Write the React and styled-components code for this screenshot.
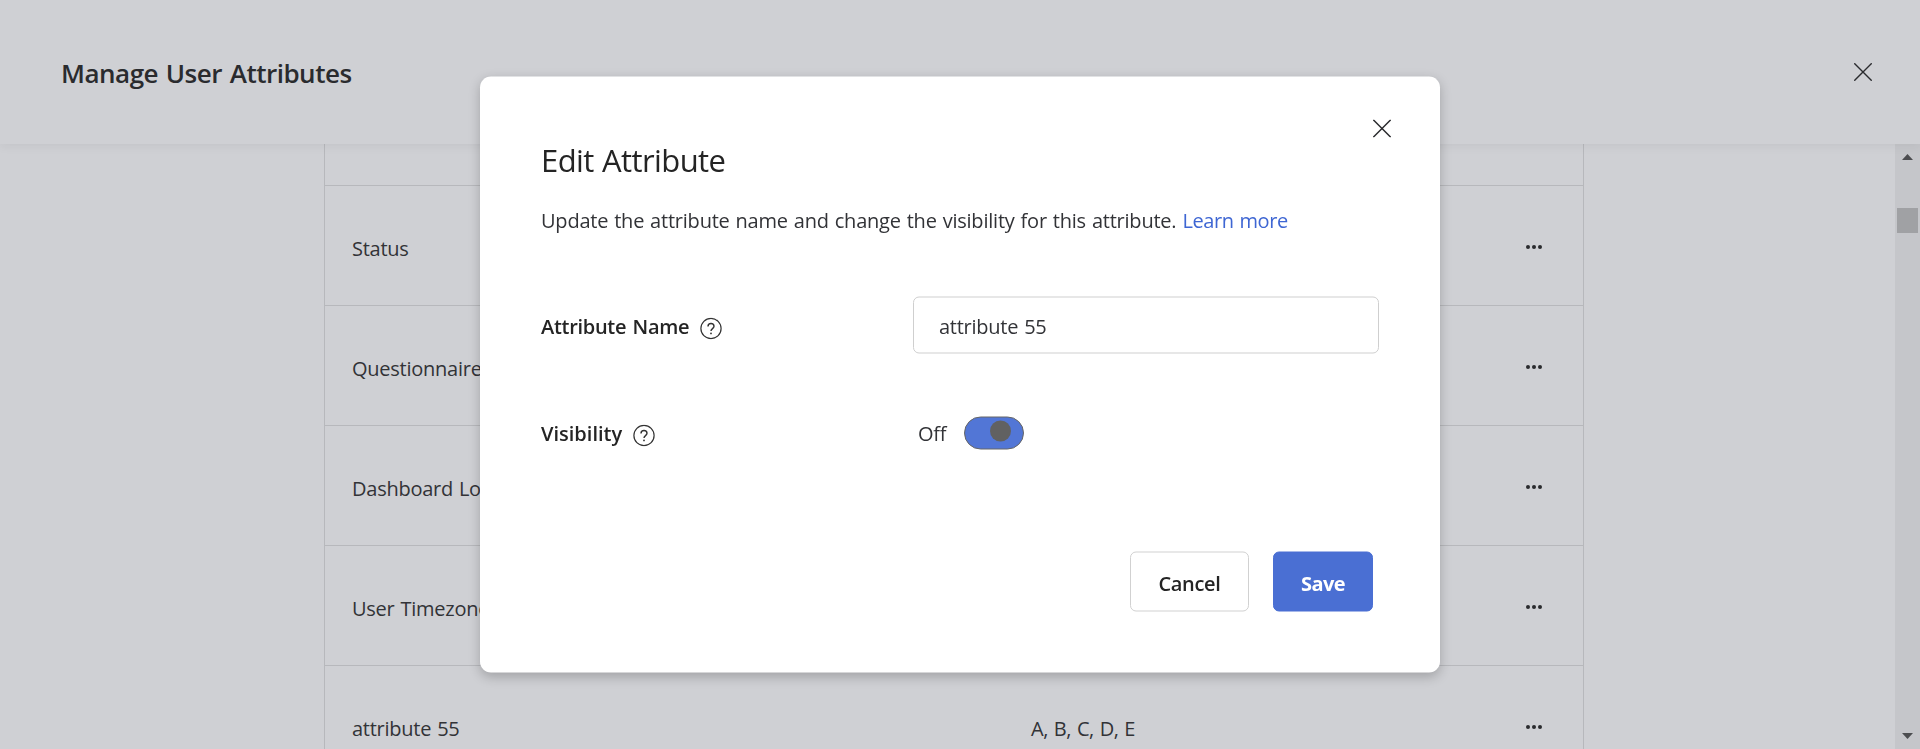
import React from "react";
import styled, { createGlobalStyle } from "styled-components";

const GlobalStyle = createGlobalStyle`
  * { box-sizing: border-box; }
  html, body { margin: 0; padding: 0; overflow: hidden; }
  body {
    font-family: "Segoe UI", "Open Sans", "Noto Sans", sans-serif;
    font-size: 20px;
    line-height: 28px;
    color: #323337;
    background: #cfd0d4;
  }
  button, input { font: inherit; color: inherit; }
`;

const Screen = styled.div`
  height: 100vh;
  display: flex;
  flex-direction: column;
  overflow: hidden;
`;

const Header = styled.header`
  position: relative;
  flex: none;
  height: 144px;
  padding: 0 48px 0 61px;
  display: flex;
  align-items: center;
  justify-content: space-between;
  box-shadow: 0 2px 10px rgba(0, 0, 0, 0.06);
  background: #cfd0d4;
`;

const PageTitle = styled.h1`
  margin: 1px 0 0;
  font-size: 26px;
  font-weight: 600;
  line-height: 36px;
  letter-spacing: -0.5px;
  word-spacing: 1.5px;
  color: #2a2b2e;
`;

const IconButton = styled.button`
  display: block;
  width: 18px;
  height: 18px;
  padding: 0;
  border: 0;
  background: none;
  color: #2a2b2e;
  svg { display: block; }
`;

const Body = styled.main`
  flex: 1;
  min-height: 0;
  display: flex;
`;

const Content = styled.div`
  flex: 1;
  padding-left: 324px;
  overflow: hidden;
`;

const Table = styled.div`
  width: 1260px;
  border: solid #b7b8bc;
  border-width: 0 1px;
`;

const Row = styled.div`
  height: ${(p) => p.$height || 120}px;
  padding: 7px 41px 0 27px;
  display: grid;
  grid-template-columns: 679px 1fr 16px;
  align-items: center;
  border-bottom: 1px solid #b7b8bc;
`;

const Cell = styled.span`
  white-space: nowrap;
  letter-spacing: ${(p) => p.$track || "-0.25px"};
  word-spacing: 1px;
`;

const Dots = styled.span`
  display: flex;
  justify-content: space-between;
  margin-top: -4px;
  i {
    width: 4px;
    height: 4px;
    border-radius: 50%;
    background: #2a2b2e;
  }
`;

const Scrollbar = styled.div`
  width: 25px;
  padding: 10px 0;
  display: flex;
  flex-direction: column;
  align-items: center;
  background: #c5c6ca;
`;

const Thumb = styled.div`
  width: 21px;
  height: 25px;
  margin-top: 48px;
  margin-bottom: auto;
  background: #a0a1a4;
`;

const Modal = styled.section`
  position: fixed;
  top: 0;
  left: 50%;
  transform: translate(-50%, calc(50vh - 50%));
  will-change: transform;
  width: 960px;
  height: 596px;
  padding: 63px 61px 61px;
  display: flex;
  flex-direction: column;
  border-radius: 11px;
  background: #fff;
  box-shadow: 0 4px 12px rgba(0, 0, 0, 0.22);
`;

const ModalClose = styled.div`
  position: absolute;
  top: 43px;
  right: 49px;
`;

const ModalTitle = styled.h2`
  margin: 0;
  font-size: 31px;
  font-weight: 400;
  line-height: 40px;
  letter-spacing: -0.6px;
  word-spacing: 1px;
  color: #242424;
`;

const Description = styled.p`
  margin: 27px 0 0;
  white-space: nowrap;
  letter-spacing: -0.22px;
  word-spacing: 1px;
`;

const Link = styled.a`
  color: #3e66d3;
  letter-spacing: -0.4px;
`;

const Field = styled.div`
  display: grid;
  grid-template-columns: 372px 466px;
  align-items: center;
  height: 58px;
  margin-top: ${(p) => p.$gap}px;
`;

const Label = styled.div`
  display: flex;
  align-items: center;
  gap: 11px;
  padding-top: 2px;
  font-weight: 600;
  color: #242424;
  white-space: nowrap;
  letter-spacing: ${(p) => p.$track};
  word-spacing: 1.5px;
  svg { margin-top: 3px; }
`;

const TextInput = styled.input`
  align-self: start;
  width: 466px;
  height: 57px;
  padding: 1px 25px 0;
  border: 1px solid #cfcfcf;
  border-radius: 6px;
  outline: 0;
  background: #fff;
  letter-spacing: -0.25px;
  word-spacing: 1px;
`;

const SwitchGroup = styled.div`
  display: flex;
  align-items: center;
  gap: 18px;
  padding-left: 5px;
`;

const SwitchState = styled(Cell)`
  padding-top: 2px;
`;

const Switch = styled.button`
  width: 60px;
  height: 33px;
  padding: 0 12px 3px 0;
  display: flex;
  align-items: center;
  justify-content: flex-end;
  border: 1px solid #666;
  border-radius: 17px;
  background: #5276d6;
`;

const Knob = styled.span`
  width: 21px;
  height: 21px;
  border-radius: 50%;
  background: #616161;
`;

const Actions = styled.footer`
  margin-top: auto;
  padding-right: 6px;
  display: flex;
  justify-content: flex-end;
  gap: 24px;
`;

const Button = styled.button`
  width: ${(p) => (p.$primary ? 100 : 119)}px;
  height: 60px;
  padding: 4px 0 0;
  border: 1px solid ${(p) => (p.$primary ? "#4a6fd3" : "#d1d1d1")};
  border-radius: 6px;
  background: ${(p) => (p.$primary ? "#4a6fd3" : "#fff")};
  color: ${(p) => (p.$primary ? "#fff" : "#242424")};
  font-weight: ${(p) => (p.$primary ? 700 : 600)};
  letter-spacing: ${(p) => (p.$primary ? -0.6 : -0.35)}px;
`;

const CloseIcon = () => (
  <svg width="18" height="18" viewBox="0 0 18 18" stroke="currentColor" strokeWidth="1.4" fill="none">
    <path d="M0.3 0.3 17.7 17.7M17.7 0.3 0.3 17.7" />
  </svg>
);

const HelpIcon = () => (
  <svg width="22" height="22" viewBox="0 0 22 22" stroke="#333" fill="none">
    <circle cx="11" cy="11" r="10.1" strokeWidth="1.2" />
    <path d="M8 8.9C8 7 9.3 6 11 6s3 1.1 3 2.8c0 2.2-3 2.5-3 4.7" strokeWidth="1.4" />
    <circle cx="11" cy="15.9" r="0.9" fill="#333" stroke="none" />
  </svg>
);

const Arrow = ({ down }) => (
  <svg width="11" height="6" viewBox="0 0 11 6" fill="#4c4d50">
    <path d={down ? "M0 0H11L5.5 6Z" : "M0 6H11L5.5 0Z"} />
  </svg>
);

const rows = [
  { name: "Status" },
  { name: "Questionnaire" },
  { name: "Dashboard Location" },
  { name: "User Timezone" },
  { name: "attribute 55", values: "A, B, C, D, E" },
];

export default function App() {
  return (
    <Screen>
      <GlobalStyle />
      <Header>
        <PageTitle>Manage User Attributes</PageTitle>
        <IconButton aria-label="Close page"><CloseIcon /></IconButton>
      </Header>
      <Body>
        <Content>
          <Table>
            <Row $height={42} />
            {rows.map((row) => (
              <Row key={row.name}>
                <Cell>{row.name}</Cell>
                <Cell $track="-0.4px">{row.values}</Cell>
                <Dots><i /><i /><i /></Dots>
              </Row>
            ))}
          </Table>
        </Content>
        <Scrollbar>
          <Arrow />
          <Thumb />
          <Arrow down />
        </Scrollbar>
      </Body>
      <Modal role="dialog">
        <ModalClose>
          <IconButton aria-label="Close dialog"><CloseIcon /></IconButton>
        </ModalClose>
        <ModalTitle>Edit Attribute</ModalTitle>
        <Description>
          Update the attribute name and change the visibility for this attribute. <Link>Learn more</Link>
        </Description>
        <Field $gap={62}>
          <Label $track="-0.3px">Attribute Name <HelpIcon /></Label>
          <TextInput defaultValue="attribute 55" />
        </Field>
        <Field $gap={49}>
          <Label $track="0px">Visibility <HelpIcon /></Label>
          <SwitchGroup>
            <SwitchState>Off</SwitchState>
            <Switch aria-label="Visibility"><Knob /></Switch>
          </SwitchGroup>
        </Field>
        <Actions>
          <Button>Cancel</Button>
          <Button $primary>Save</Button>
        </Actions>
      </Modal>
    </Screen>
  );
}
